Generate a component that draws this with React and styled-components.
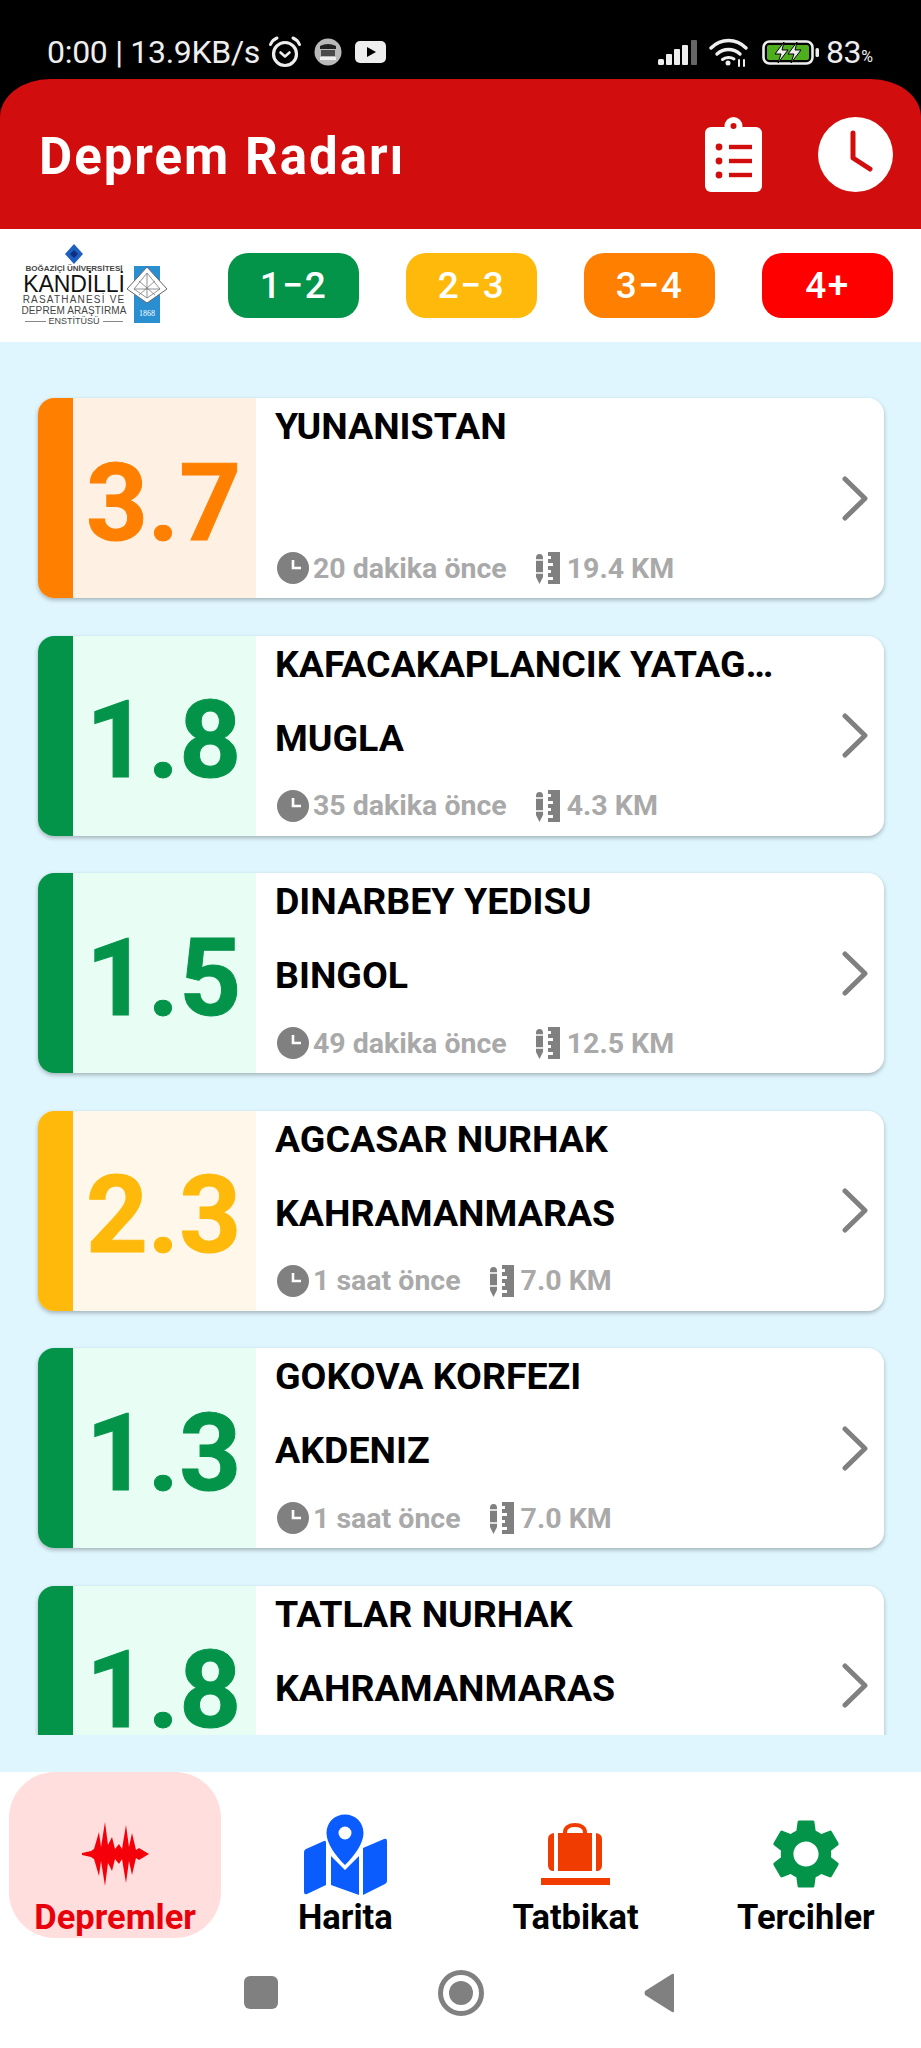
import styled, { createGlobalStyle } from 'styled-components';
import { MdSettings } from 'react-icons/md';

const GlobalStyle = createGlobalStyle`
    html, body {
        margin: 0;
        padding: 0;
        background: #fff;
        font-family: Roboto, "Noto Sans", sans-serif;
    }
    * {
        box-sizing: border-box;
    }
`;

const GREEN = '#03944a';
const YELLOW = '#ffb90a';
const ORANGE = '#ff8000';
const RED = '#ff0000';
const GREY = '#808080';

const levels = {
    green: { color: GREEN, tint: '#e8fdf3' },
    yellow: { color: YELLOW, tint: '#fff8ea' },
    orange: { color: ORANGE, tint: '#fff0e4' },
};

const quakes = [
    { mag: '3.7', level: 'orange', place: 'YUNANISTAN', city: '', ago: '20 dakika önce', depth: '19.4 KM' },
    { mag: '1.8', level: 'green', place: 'KAFACAKAPLANCIK YATAGAN', city: 'MUGLA', ago: '35 dakika önce', depth: '4.3 KM' },
    { mag: '1.5', level: 'green', place: 'DINARBEY YEDISU', city: 'BINGOL', ago: '49 dakika önce', depth: '12.5 KM' },
    { mag: '2.3', level: 'yellow', place: 'AGCASAR NURHAK', city: 'KAHRAMANMARAS', ago: '1 saat önce', depth: '7.0 KM' },
    { mag: '1.3', level: 'green', place: 'GOKOVA KORFEZI', city: 'AKDENIZ', ago: '1 saat önce', depth: '7.0 KM' },
    { mag: '1.8', level: 'green', place: 'TATLAR NURHAK', city: 'KAHRAMANMARAS', ago: '1 saat önce', depth: '7.0 KM' },
];

const Screen = styled.div`
    display: flex;
    flex-direction: column;
    width: 921px;
    height: 2048px;
    overflow: hidden;
    background: #fff;
`;

const Top = styled.div`
    background: #000;
`;

const StatusBar = styled.div`
    display: flex;
    align-items: center;
    justify-content: space-between;
    height: 79px;
    padding: 25px 48px 0 47px;
    color: #eee;
`;

const StatusGroup = styled.div`
    display: flex;
    align-items: center;
`;

const StatusText = styled.span`
    margin-left: ${(p) => p.$left || 0}px;
    font-size: 32px;
    letter-spacing: -0.3px;
    white-space: nowrap;
`;

const Percent = styled.span`
    font-size: 16px;
    margin-top: 8px;
`;

const StatusIcon = styled.svg`
    display: block;
    flex-shrink: 0;
    margin-left: ${(p) => p.$left || 0}px;
`;

const Header = styled.header`
    display: flex;
    align-items: center;
    justify-content: space-between;
    height: 150px;
    padding: 0 28px 0 39px;
    background: #d10d0d;
    border-radius: 50px 50px 0 0 / 38px 38px 0 0;
`;

const AppTitle = styled.h1`
    margin: 4px 0 0;
    color: #fff;
    font-size: 51px;
    font-weight: 700;
    letter-spacing: 2px;
`;

const HeaderActions = styled.div`
    display: flex;
    align-items: center;
    gap: 56px;
`;

const FilterBar = styled.div`
    display: flex;
    align-items: center;
    justify-content: space-between;
    height: 113px;
    padding: 0 28px 0 25px;
    background: #fff;
`;

const Logo = styled.div`
    display: flex;
    align-items: flex-end;
    gap: 3px;
    width: 142px;
`;

const LogoText = styled.div`
    display: flex;
    flex-direction: column;
    align-items: center;
    width: 98px;
    font-family: "Liberation Sans", sans-serif;
    white-space: nowrap;
`;

const LogoLine = styled.span`
    font-size: ${(p) => p.$size}px;
    line-height: ${(p) => p.$height}px;
    font-weight: ${(p) => p.$weight || 400};
    letter-spacing: ${(p) => p.$spacing || 0}px;
    color: ${(p) => p.$color || '#444'};
`;

const LogoFooter = styled(LogoLine)`
    display: flex;
    align-items: center;
    gap: 3px;
    width: 100%;

    &::before,
    &::after {
        content: '';
        flex: 1;
        height: 1px;
        background: #888;
    }
`;

const LogoEmblemWrap = styled.div`
    display: flex;
    margin-bottom: 4px;
`;

const Chips = styled.div`
    display: flex;
    gap: 47px;
`;

const Chip = styled.div`
    display: flex;
    align-items: center;
    justify-content: center;
    width: 131px;
    height: 65px;
    border-radius: 20px;
    background: ${(p) => p.$color};
    color: #fff;
    font-size: 37px;
    font-weight: 500;
    letter-spacing: 1.5px;
`;

const Main = styled.main`
    flex: 1;
    min-height: 0;
    display: flex;
    flex-direction: column;
    padding-bottom: 37px;
    background: #dff6fe;
`;

const Scroller = styled.div`
    flex: 1;
    min-height: 0;
    overflow: hidden;
    display: flex;
    flex-direction: column;
    gap: 37.6px;
    padding: 56px 37px 0 38px;
`;

const Card = styled.article`
    flex-shrink: 0;
    display: flex;
    align-items: stretch;
    height: 200px;
    background: #fff;
    border-radius: 16px;
    overflow: hidden;
    box-shadow: 0 2px 4px rgba(0, 0, 0, 0.28);
`;

const Strip = styled.div`
    width: 35px;
    background: ${(p) => p.$color};
`;

const Magnitude = styled.div`
    display: flex;
    align-items: center;
    justify-content: center;
    width: 183px;
    padding-top: 9px;
    padding-right: 2px;
    background: ${(p) => p.$tint};
    color: ${(p) => p.$color};
    font-size: 108px;
    font-weight: 700;
    line-height: 1;
    -webkit-text-stroke: 1px ${(p) => p.$color};
`;

const Body = styled.div`
    flex: 1;
    min-width: 0;
    display: flex;
    flex-direction: column;
    gap: 20px;
    padding-left: 19px;
`;

const Place = styled.div`
    height: 54px;
    max-width: 503px;
    overflow: hidden;
    white-space: nowrap;
    text-overflow: ellipsis;
    color: #000;
    font-size: 37.5px;
    font-weight: 700;
    line-height: 56px;
`;

const Meta = styled.div`
    display: flex;
    align-items: center;
    height: 44px;
    padding-left: 2px;
    color: #a9a9a9;
    font-size: 28.5px;
    font-weight: 700;
    white-space: nowrap;
`;

const MetaIcon = styled.svg`
    display: block;
    flex-shrink: 0;
    margin-left: ${(p) => p.$left || 0}px;
    margin-right: ${(p) => p.$right || 0}px;
`;

const Chevron = styled.svg`
    align-self: center;
    flex-shrink: 0;
    display: block;
    margin-right: 15px;
`;

const TabBar = styled.nav`
    display: grid;
    grid-template-columns: repeat(4, 1fr);
    height: 165px;
    background: #fff;
`;

const Tab = styled.div`
    position: relative;
    display: flex;
    flex-direction: column;
    align-items: center;
    padding-top: 40px;
    color: ${(p) => (p.$active ? '#e8000b' : '#000')};
    font-size: 34.5px;
    font-weight: 700;
`;

const ActivePill = styled.div`
    position: absolute;
    top: 0;
    left: 9px;
    right: 9px;
    bottom: 0;
    background: #ffdedd;
    border-radius: 46px;
`;

const TabIcon = styled.div`
    position: relative;
    display: flex;
    align-items: center;
    justify-content: center;
    height: 84px;
`;

const TabLabel = styled.span`
    position: relative;
    line-height: 42px;
`;

const SystemBar = styled.div`
    display: flex;
    align-items: center;
    justify-content: center;
    gap: 160px;
    height: 111px;
    padding-right: 4px;
    background: #fff;
`;

const SystemSquare = styled.div`
    width: 34px;
    height: 33px;
    border-radius: 6px;
    background: ${GREY};
`;

const SystemCircle = styled.div`
    display: flex;
    align-items: center;
    justify-content: center;
    width: 46px;
    height: 46px;
    border: 5px solid ${GREY};
    border-radius: 50%;

    &::after {
        content: '';
        width: 24px;
        height: 24px;
        border-radius: 50%;
        background: ${GREY};
    }
`;

const waveSpikes = [
    [0, 1], [9, 3], [12, 5], [17, 22], [19, 7], [23, 32], [26, 9], [30, 17], [33, 5], [37, 10],
    [40, 5], [44, 29], [47, 7], [50, 21], [54, 4], [57, 6], [62, 3], [67, 0],
];
const waveTop = waveSpikes.map(([x, h]) => `${x},${33 - h}`);
const waveBottom = [...waveSpikes].reverse().map(([x, h]) => `${x},${33 + h}`);
const wavePoints = [...waveTop, ...waveBottom].join(' ');

const AlarmIcon = () => (
    <StatusIcon $left={8} width="34" height="32" viewBox="0 0 34 32" fill="none" stroke="#eee">
        <circle cx="17" cy="18" r="11.5" strokeWidth="3.2" />
        <path d="M12.5 16.5l4.5 4 4.5-4" strokeWidth="2.6" strokeLinecap="round" strokeLinejoin="round" />
        <path d="M2.5 8.5C4 5 6.5 3 9 2M31.5 8.5C30 5 27.5 3 25 2" strokeWidth="3" strokeLinecap="round" />
    </StatusIcon>
);

const BadgeIcon = () => (
    <StatusIcon $left={12} width="28" height="28" viewBox="0 0 28 28">
        <circle cx="14" cy="14" r="13.5" fill="#b9b9b9" />
        <path d="M6 8q8-4 16 0v3H6z" fill="#222" />
        <rect x="7" y="12" width="14" height="6" fill="#4a4a4a" />
        <rect x="6" y="19" width="16" height="3" fill="#eee" />
    </StatusIcon>
);

const PlayIcon = () => (
    <StatusIcon $left={13} width="31" height="22" viewBox="0 0 31 22">
        <rect width="31" height="22" rx="5" fill="#eee" />
        <path d="M12 6l9 5-9 5z" fill="#000" />
    </StatusIcon>
);

const SignalIcon = () => (
    <StatusIcon width="39" height="25" viewBox="0 0 39 25">
        <rect x="0" y="19" width="6" height="6" rx="1.5" fill="#eee" />
        <rect x="8" y="14" width="6" height="11" rx="1" fill="#eee" />
        <rect x="16" y="9" width="6" height="16" rx="1" fill="#eee" />
        <rect x="24" y="5" width="6" height="20" rx="1" fill="#eee" />
        <rect x="33" y="0" width="6" height="25" rx="1" fill="#666" />
    </StatusIcon>
);

const WifiIcon = () => (
    <StatusIcon $left={12} width="39" height="29" viewBox="0 0 39 29" fill="none" stroke="#eee" strokeLinecap="round">
        <path d="M2 10C12 0 27 0 37 10" strokeWidth="3.4" />
        <path d="M8 16C14.5 10 24.5 10 31 16" strokeWidth="3.4" />
        <path d="M13.5 21.5C16.5 19 22 19 25 21" strokeWidth="3" />
        <circle cx="19" cy="25" r="2.5" fill="#eee" stroke="none" />
        <path d="M30 22v6M35 22v6" strokeWidth="2" />
    </StatusIcon>
);

const BatteryIcon = () => (
    <StatusIcon $left={14} width="57" height="25" viewBox="0 0 57 25">
        <rect x="1.5" y="1.5" width="49" height="22" rx="6" fill="none" stroke="#eee" strokeWidth="2.6" />
        <rect x="5" y="5" width="42" height="15" rx="2" fill="#4fae1e" />
        <rect x="53.5" y="8" width="3.5" height="9" rx="1.5" fill="#eee" />
        <path d="M22 2l-9 12h6l-3 9 10-13h-6zM35 2l-9 12h6l-3 9 10-13h-6z" fill="#eee" stroke="#000" strokeWidth="1" />
    </StatusIcon>
);

const ClipboardIcon = () => (
    <svg width="57" height="75" viewBox="0 0 57 75">
        <rect y="10" width="57" height="65" rx="6" fill="#fff" />
        <circle cx="28.5" cy="9" r="9" fill="#fff" />
        <circle cx="28.5" cy="9" r="3" fill="#d10d0d" />
        {[30, 44, 58].map((y) => (
            <g key={y} fill="#d10d0d">
                <circle cx="14" cy={y} r="3.4" />
                <rect x="24" y={y - 2.2} width="23" height="4.4" />
            </g>
        ))}
    </svg>
);

const HeaderClock = () => (
    <svg width="75" height="75" viewBox="0 0 75 75">
        <circle cx="37.5" cy="37.5" r="37.5" fill="#fff" />
        <path d="M35 16v25l17 11" fill="none" stroke="#d10d0d" strokeWidth="5" strokeLinecap="round" strokeLinejoin="round" />
    </svg>
);

const LogoEmblem = () => (
    <svg width="42" height="57" viewBox="0 0 42 57">
        <rect x="8" y="0" width="26" height="57" fill="#2a8fd0" />
        <path d="M21 1L41 23 21 37 1 23z" fill="#fff" stroke="#666" strokeWidth="1" />
        <path d="M21 7L34 23 21 32 8 23zM21 7v25M8 23h26M13 15l16 14M29 15L13 29" fill="none" stroke="#777" strokeWidth="0.8" />
        <text x="21" y="50" fontSize="8" fill="#fff" textAnchor="middle" fontFamily="Liberation Serif, serif">1868</text>
    </svg>
);

const LogoDiamond = () => (
    <svg width="18" height="20" viewBox="0 0 18 20">
        <path d="M9 0l9 10-9 10-9-10z" fill="#1f5fc0" />
        <path d="M9 6l4 4-4 4-4-4z" fill="#0d2f80" />
    </svg>
);

const ClockSmall = () => (
    <MetaIcon $right={4} width="32" height="32" viewBox="0 0 32 32">
        <circle cx="16" cy="16" r="16" fill={GREY} />
        <path d="M16 8v8h8" fill="none" stroke="#fff" strokeWidth="2.6" />
    </MetaIcon>
);

const RulerSmall = () => (
    <MetaIcon $left={29} $right={7} width="24" height="34" viewBox="0 0 24 34">
        <path d="M0 7q0-4 3.5-4T7 7v19l-3.5 7L0 26z" fill={GREY} />
        <path d="M0 9h7M0 22h7" stroke="#fff" strokeWidth="1.5" />
        <path d="M12 1h12v32H12v-4h5v-3h-5v-4h3v-3h-3v-4h5v-3h-5V8h3V5h-3z" fill={GREY} />
    </MetaIcon>
);

const ChevronRight = () => (
    <Chevron width="27" height="45" viewBox="0 0 27 45">
        <path d="M3 3l20 19.5L3 42" fill="none" stroke={GREY} strokeWidth="5" strokeLinecap="round" strokeLinejoin="round" />
    </Chevron>
);

const WaveIcon = () => (
    <svg width="67" height="66" viewBox="0 0 67 66">
        <polygon points={wavePoints} fill="#f5000a" />
    </svg>
);

const MapIcon = () => (
    <svg width="83" height="82" viewBox="0 0 83 82" fill="#0a5cff">
        <path d="M2 36l18-8q2-1 2 2v42L3 81q-3 1-3-2V39q0-2 2-3z" />
        <path d="M27 43l14 14 14-14v39L27 72z" />
        <path d="M59 35l21-9q3-1 3 2v40q0 2-2 3L59 82z" />
        <path fillRule="evenodd" d="M41 1.5c10.5 0 18.5 8 18.5 18.5 0 10-9 23-18.5 32-9.5-9-18.5-22-18.5-32C22.500 9.5 30.5 1.5 41 1.5zM41 13.5a6.5 6.5 0 1 0 0 13 6.5 6.5 0 0 0 0-13z" />
    </svg>
);

const LuggageIcon = () => (
    <svg width="69" height="62" viewBox="0 0 69 62" fill="#f03c00">
        <path d="M24 11V9.5C24 4.5 28 2 34 2s10 2.5 10 7.5V11" fill="none" stroke="#f03c00" strokeWidth="4" />
        <rect x="17" y="10" width="34" height="38" />
        <path d="M13 10v38H11q-4-1-4-6V16q0-5 6-6zM55 10v38h2q4-1 4-6V16q0-5-6-6z" />
        <rect y="55" width="69" height="7" />
    </svg>
);

const tabs = [
    { label: 'Depremler', icon: <WaveIcon />, active: true },
    { label: 'Harita', icon: <MapIcon /> },
    { label: 'Tatbikat', icon: <LuggageIcon /> },
    { label: 'Tercihler', icon: <MdSettings size={84} color={GREEN} /> },
];

const chips = [
    { label: '1−2', color: GREEN },
    { label: '2−3', color: YELLOW },
    { label: '3−4', color: ORANGE },
    { label: '4+', color: RED },
];

const App = () => (
    <Screen>
        <GlobalStyle />
        <Top>
            <StatusBar>
                <StatusGroup>
                    <StatusText>0:00 | 13.9KB/s</StatusText>
                    <AlarmIcon />
                    <BadgeIcon />
                    <PlayIcon />
                </StatusGroup>
                <StatusGroup>
                    <SignalIcon />
                    <WifiIcon />
                    <BatteryIcon />
                    <StatusText $left={7}>83</StatusText>
                    <Percent>%</Percent>
                </StatusGroup>
            </StatusBar>
            <Header>
                <AppTitle>Deprem Radarı</AppTitle>
                <HeaderActions>
                    <ClipboardIcon />
                    <HeaderClock />
                </HeaderActions>
            </Header>
        </Top>
        <FilterBar>
            <Logo>
                <LogoText>
                    <LogoDiamond />
                    <LogoLine $size={8} $height={10} $weight={700}>BOĞAZİÇİ ÜNİVERSİTESİ</LogoLine>
                    <LogoLine $size={23} $height={20} $spacing={-0.1} $color="#111">KANDİLLİ</LogoLine>
                    <LogoLine $size={10} $height={11} $spacing={1.2}>RASATHANESİ VE</LogoLine>
                    <LogoLine $size={10} $height={11} $spacing={0.1}>DEPREM ARAŞTIRMA</LogoLine>
                    <LogoFooter $size={9} $height={11}>ENSTİTÜSÜ</LogoFooter>
                </LogoText>
                <LogoEmblemWrap>
                    <LogoEmblem />
                </LogoEmblemWrap>
            </Logo>
            <Chips>
                {chips.map((chip) => (
                    <Chip key={chip.label} $color={chip.color}>{chip.label}</Chip>
                ))}
            </Chips>
        </FilterBar>
        <Main>
            <Scroller>
                {quakes.map((quake, i) => {
                    const level = levels[quake.level];
                    return (
                        <Card key={i}>
                            <Strip $color={level.color} />
                            <Magnitude $color={level.color} $tint={level.tint}>{quake.mag}</Magnitude>
                            <Body>
                                <Place>{quake.place}</Place>
                                <Place>{quake.city}</Place>
                                <Meta>
                                    <ClockSmall />
                                    {quake.ago}
                                    <RulerSmall />
                                    {quake.depth}
                                </Meta>
                            </Body>
                            <ChevronRight />
                        </Card>
                    );
                })}
            </Scroller>
        </Main>
        <TabBar>
            {tabs.map((tab) => (
                <Tab key={tab.label} $active={tab.active}>
                    {tab.active && <ActivePill />}
                    <TabIcon>{tab.icon}</TabIcon>
                    <TabLabel>{tab.label}</TabLabel>
                </Tab>
            ))}
        </TabBar>
        <SystemBar>
            <SystemSquare />
            <SystemCircle />
            <svg width="30" height="40" viewBox="0 0 30 40">
                <path d="M30 2v36q0 2-2 1L1 22q-1-2 0-4L28 1q2-1 2 1z" fill={GREY} />
            </svg>
        </SystemBar>
    </Screen>
);

export default App;
